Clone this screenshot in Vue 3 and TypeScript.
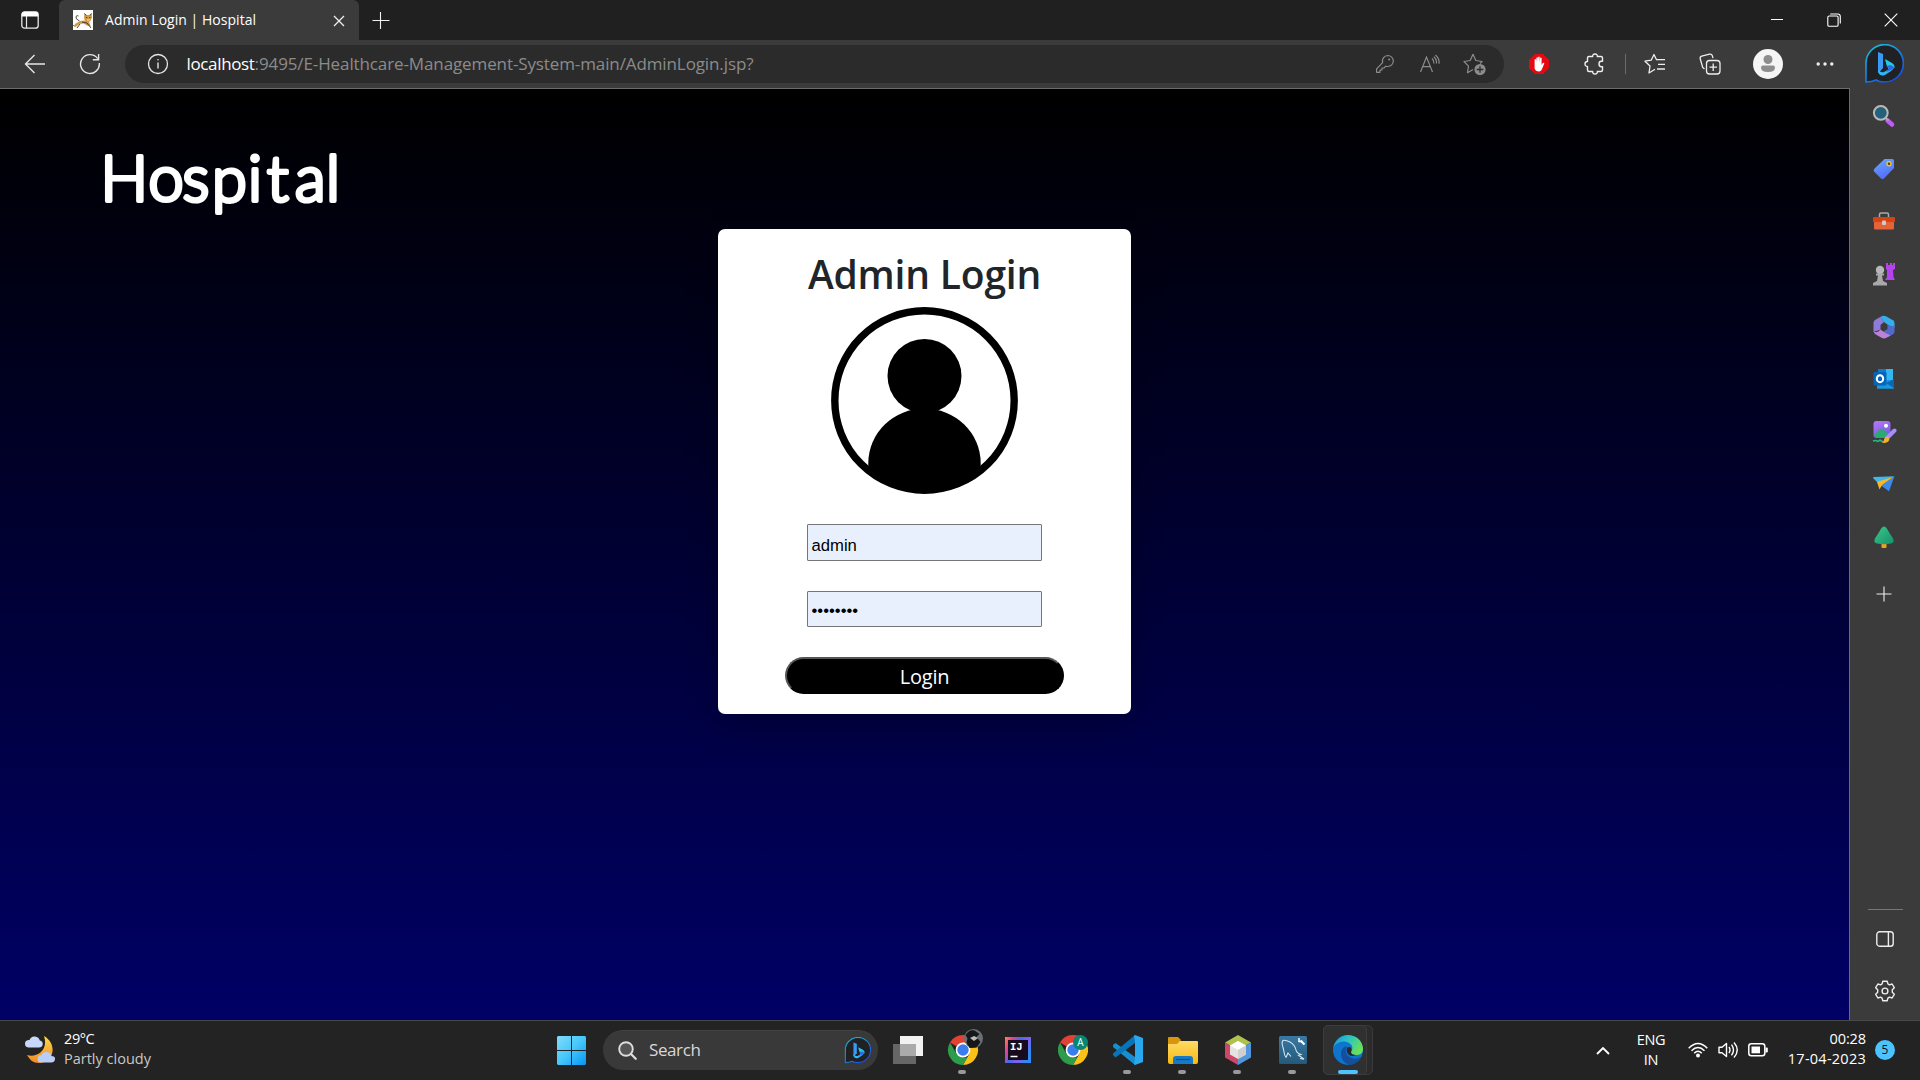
<script setup lang="ts">
interface TaskApp {
  id: string
  running: boolean
}

const apps: TaskApp[] = [
  { id: 'taskview', running: false },
  { id: 'chrome-photo', running: true },
  { id: 'intellij', running: false },
  { id: 'chrome-a', running: false },
  { id: 'vscode', running: true },
  { id: 'folder', running: true },
  { id: 'netbeans', running: true },
  { id: 'mysql', running: true },
  { id: 'edge', running: false },
]

const tools: string[] = ['search', 'shopping', 'tools', 'games', 'm365', 'outlook', 'designer', 'drop', 'tree']
</script>

<template>
  <div class="screen">
    <header class="tabs">
      <div class="tab-actions">
        <svg width="18" height="18" viewBox="0 0 18 18"><rect x="0.8" y="0.8" width="16.4" height="16.4" rx="2.8" fill="none" stroke="#e8e8e8" stroke-width="1.3" /><path d="M.8 5.5V3.5Q.8.8 3.5.8h11q2.7 0 2.7 2.7v2z" fill="#fff" /><path d="M5.5 5v12" stroke="#e8e8e8" stroke-width="1.2" /></svg>
      </div>
      <div class="tab">
        <svg class="favicon" width="20" height="20" viewBox="0 0 20 20"><path fill="#fff" d="M0 0h20v20H0z" /><path d="M1 17l1-3 5-3 5-.5L11 8l.5-4.500 2.500 1.500h2l2.500-1.500.5 4-1.500 3.500-1.500 1 2 4.500-4-1-3.500-2-4 .5-4 3z" fill="#d29a45" /><path d="M6.500 11Q2 9 3 6.500q1-1.500 2.500-.5M1 16l-.5-1M9 12l5 1 4 5M11.500 3.500l1.500 2m4 0l1.500-2M7 14l-3 4" fill="none" stroke="#3d3426" stroke-width=".9" /><path d="M13 7.500h1.200m2 0h1.200" stroke="#4c3c1a" /><path d="M14 10h3" stroke="#f5e2a4" /></svg>
        <span class="tab-title">Admin Login | Hospital</span>
        <svg class="tab-close" width="12" height="12" viewBox="0 0 12 12"><path d="M1 1l10 10M11 1L1 11" stroke="#eee" stroke-width="1.3" /></svg>
      </div>
      <svg class="new-tab" width="18" height="18" viewBox="0 0 18 18"><path d="M.5 9.500h17M8.500 1v17" stroke="#f0f0f0" stroke-width="1.1" /></svg>
      <div class="window-controls">
        <svg width="14" height="14" viewBox="0 0 14 14"><path d="M1 6.500h12" stroke="#fff" stroke-width="1" /></svg>
        <svg width="14" height="14" viewBox="0 0 14 14" fill="none" stroke="#fff" stroke-width="1.1"><rect x=".8" y="3" width="10.3" height="10.3" rx="1.3" /><path d="M3.2 1h7.5q2.6 0 2.6 2.6v7" /></svg>
        <svg width="14" height="14" viewBox="0 0 14 14"><path d="M.7.7l12.6 12.6M13.3.7L.7 13.3" stroke="#fff" stroke-width="1.1" /></svg>
      </div>
    </header>

    <nav class="toolbar">
      <div class="nav-back"><svg width="22" height="20" viewBox="0 0 22 20" fill="none" stroke="#e6e6e6" stroke-width="1.4"><path d="M21 10H1.5M10.5 1L1.5 10l9 9" /></svg></div>
      <div class="nav-reload"><svg width="22" height="22" viewBox="0 0 22 22" fill="none" stroke="#e6e6e6" stroke-width="1.4"><path d="M20.3 10A9.4 9.4 0 1 1 18.7 5.7M19.6 1v5.8h-5.8" /></svg></div>
      <div class="address">
        <svg class="info" width="22" height="22" viewBox="0 0 22 22" fill="none" stroke="#e6e6e6" stroke-width="1.3"><circle cx="11" cy="11" r="9.5" /><path d="M11 9.5v6" stroke-width="1.4" /><circle cx="11" cy="6.8" r=".8" fill="#e6e6e6" stroke="none" /></svg>
        <div class="url"><span class="host">localhost</span><span class="path">:9495/E-Healthcare-Management-System-main/AdminLogin.jsp?</span></div>
        <div class="address-icons">
          <svg width="20" height="20" viewBox="0 0 20 20" fill="none" stroke="#8c8c8c" stroke-width="1.2"><path d="M12.8 1.5a5.5 5.5 0 0 1 0 11q-1.1 0-2-.3L9 14H7v2H5v2.3H1.6v-3.5l6-6.1a5.5 5.5 0 0 1 5.2-7.2z" stroke-linejoin="round" /><circle cx="14.2" cy="5.6" r="1" fill="#8c8c8c" stroke="none" /></svg>
          <svg width="22" height="20" viewBox="0 0 22 20" fill="none" stroke="#8c8c8c" stroke-width="1.2"><path d="M1.5 18L7.5 3l6 15M3.6 12.7h7.8M13 4.5q2.1 1.8 2 5M14.8 2.7q3 2.4 2.7 6.8M16.5 1q4 3.4 3.6 8.8" /></svg>
          <svg width="24" height="22" viewBox="0 0 24 22" fill="none" stroke="#8c8c8c" stroke-width="1.2"><path d="M10 16.5l-5.5 3.2 1-6.5L1 8.5l6.2-1L10 1.3l2.8 6.2 6.3 1-2 2" stroke-linejoin="round" /><circle cx="17" cy="16.5" r="5.6" fill="#8c8c8c" stroke="none" /><path d="M17 13.2v6.6M13.7 16.5h6.6" stroke="#2b2b2b" stroke-width="1.3" /></svg>
        </div>
      </div>
      <div class="tools-row">
        <div><svg width="20" height="20" viewBox="0 0 20 20"><path d="M6 0h8l6 6v8l-6 6H6l-6-6V6z" fill="#e50914" /><path d="M5.6 11V5.500q1-.8 1.500 0V9l.3-5.300q.9-.9 1.500 0V9l.3-6q.9-.9 1.500 0v6l.4-5q.9-.8 1.500 0v7l1.200-2q1.200-.6 1.500.4l-2.600 6.400q-.9 1.700-2.700 1.700-3.500 0-4.400-3z" fill="#fff" /></svg></div>
        <div><svg width="22" height="22" viewBox="0 0 22 22" fill="none" stroke="#eee" stroke-width="1.400" stroke-linejoin="round"><path d="M5 3.500h3.700Q8.500 1 11 1t2.300 2.500H17q1.500 0 1.500 1.500v3.300h-1.200q-2.300 0-2.300 2.700t2.300 2.700h1.200V17q0 1.500-1.500 1.500h-3.700Q13.500 21 11 21t-2.300-2.500H5q-1.500 0-1.500-1.500v-3.500Q1 13.500 1 11t2.500-2.500V5q0-1.500 1.500-1.500z" /></svg></div>
        <i class="separator"></i>
        <div><svg width="22" height="22" viewBox="0 0 22 22" fill="none" stroke="#eee" stroke-width="1.3" stroke-linejoin="round"><path d="M11 16.3L5 20l1-7L1 8.2l6.2-1L10 1.5l2.500 5.200H21M14 11.300h7M13 16h8" /></svg></div>
        <div><svg width="22" height="22" viewBox="0 0 22 22" fill="none" stroke="#eee" stroke-width="1.3"><rect x="7.5" y="7.5" width="13.5" height="13.5" rx="3" /><path d="M14.2 10.5v7.500M10.500 14.200H18M5.500 16L3.700 14.500 1.200 5.800q-.4-2 1.500-2.700l7.800-2Q12.800.8 13.300 2.600l.7 2.600" /></svg></div>
        <div><svg width="30" height="30" viewBox="0 0 30 30"><circle cx="15" cy="15" r="15" fill="#f5f5f5" /><circle cx="15" cy="10.500" r="4.500" fill="#8d8d8d" /><path d="M10 16.500h10q2 0 2 2 0 4.500-7 4.500t-7-4.500q0-2 2-2z" fill="#8d8d8d" /></svg></div>
        <div><svg width="18" height="6" viewBox="0 0 18 6" fill="#eee"><circle cx="2.2" cy="3" r="1.7" /><circle cx="9" cy="3" r="1.7" /><circle cx="15.8" cy="3" r="1.7" /></svg></div>
        <div><svg width="40" height="40" viewBox="0 0 40 40"><use href="#bing" /></svg></div>
      </div>
    </nav>

    <div class="content">
      <main class="page">
        <h1 class="brand">
          <svg width="260" height="96" viewBox="90 130 260 96"><text y="200.5 200.5 200.5 202 200.5 200.500 200.500 200.500" x="100.5 148.5 182.5 212 248 267 295 326">Hospital</text></svg>
        </h1>
        <form class="card" @submit.prevent>
          <h2>Admin Login</h2>
          <svg class="person" width="187" height="187" viewBox="0 0 187 187"><defs><clipPath id="disc"><circle cx="93.5" cy="93.5" r="92" /></clipPath></defs><circle cx="93.5" cy="93.5" r="89.7" fill="none" stroke="#000" stroke-width="7.4" /><circle cx="93.5" cy="69" r="37" /><path clip-path="url(#disc)" d="M37.3 187v-31a56.2 54.5 0 0 1 112.4 0v31z" /></svg>
          <div class="field user">admin</div>
          <div class="field pass">••••••••</div>
          <button class="submit" type="submit">Login</button>
        </form>
      </main>

      <aside class="sidebar">
        <div v-for="tool in tools" :key="tool" class="side-item">
          <svg v-if="tool === 'search'" width="24" height="24" viewBox="0 0 24 24"><path d="M15.500 16.500l4.500 4" stroke="#c05cf5" stroke-width="4.500" stroke-linecap="round" /><path d="M12.500 13l4 3.500" stroke="#aaa" stroke-width="2" /><circle cx="8.8" cy="8.8" r="6.9" fill="#23627d" stroke="#bdb9b5" stroke-width="2" /></svg>
          <svg v-else-if="tool === 'shopping'" width="24" height="24" viewBox="0 0 24 24"><path d="M12.500 2l7.500-.1q2 0 2 2V11L12 21.500q-1.500 1.200-3 0l-6.700-6.700q-1.300-1.600 0-3z" fill="url(#tag)" /><circle cx="17" cy="6.8" r="2" fill="#473b30" stroke="#f6c51a" stroke-width="1.4" /></svg>
          <svg v-else-if="tool === 'tools'" width="24" height="24" viewBox="0 0 24 24"><path d="M7.500 8V5.500Q7.500 4 9 4h6q1.500 0 1.500 1.500V8" fill="none" stroke="#aaa" stroke-width="1.500" /><rect x="2" y="11" width="20" height="9.500" rx="1.200" fill="#e66238" /><path d="M2 8h20l1 .8V13H1V8.800z" fill="#d44311" /><rect x="10" y="11.500" width="4" height="4.500" rx="1" fill="#ccc" /></svg>
          <svg v-else-if="tool === 'games'" width="24" height="24" viewBox="0 0 24 24"><path d="M14 1h2v2h2V1h2v2h1V1h2v6l-2 1 .5 7 1.500 3H13l2-3V8l-1-1z" fill="#b543ed" /><circle cx="8" cy="8" r="4.200" fill="#b7b7b7" /><path d="M4 11.500h8v2h-2l1 5.500 4 2v2.500H1V21l4-2 1-5.500H4z" fill="#a9a9a9" /></svg>
          <svg v-else-if="tool === 'm365'" width="24" height="24" viewBox="0 0 24 24"><path d="M10 1L3 5q-1.500 1-1.500 3v9l7-2.500V10l3.500-3q-3-3-2-6z" fill="#917bd9" /><path d="M10 1q2-.8 4 .2l7 4q1.500 1 1.500 3V13l-6.500-3-4-3Q9 4 10 1z" fill="#35afe8" /><path d="M22.500 10v7q0 1.400-1.500 2.300l-5 2.700-7-4 6.500-4V9.700q5 3 7 .3z" fill="#5369cd" /><path d="M1.500 16.500q4 2 7-2l4 3 6 3-4 2.300q-2.500 1.200-5 0L3 19z" fill="#bd82d8" /></svg>
          <svg v-else-if="tool === 'outlook'" width="24" height="24" viewBox="0 0 24 24"><path fill="#35b8f1" d="M6 2h15v13H6z" /><path fill="#0f79cc" d="M6 2h8v7H6z" /><path d="M5 13h17v8q0 .8-.8.800H5z" fill="#1898e0" /><path d="M14 16l8-4v9z" fill="#0b66b3" /><rect x="1.500" y="5" width="13" height="13.500" rx="1.300" fill="#0565b8" /><ellipse cx="8" cy="11.700" rx="3.200" ry="3.500" fill="none" stroke="#fff" stroke-width="2" /></svg>
          <svg v-else-if="tool === 'designer'" width="26" height="26" viewBox="0 0 26 26"><rect x="2.500" y="2" width="17" height="17" rx="3" fill="url(#violet)" /><circle cx="15" cy="6.800" r="2" fill="#fff" /><path d="M3 16l6-6q1.500-1 3 0l6 6q-1 3-3 3H6q-2 0-3-3z" fill="#2aa970" /><path d="M2 22q3-1 4 0t3-1l3 2" fill="none" stroke="#21bd83" stroke-width="1.600" /><path d="M16 19l7.500-7.500" stroke="#a78df5" stroke-width="4" stroke-linecap="round" /><path d="M17.500 18q2 3-1 5-3 1.500-5.500.500 2-1 2-3 1-3.500 4.500-2.500z" fill="#f4b12d" /></svg>
          <svg v-else-if="tool === 'drop'" width="24" height="24" viewBox="0 0 24 24"><path d="M1 6q0-.8 1-1l20-.8L6 11z" fill="#42b7ed" /><path d="M22.500 4L9 13.500l8 5.700z" fill="#3b8bed" /><path d="M22 4.500L5 10l2.500 7.500L10 13z" fill="#f7b823" /></svg>
          <svg v-else width="24" height="24" viewBox="0 0 24 24"><rect x="9.500" y="18" width="5" height="5" rx=".8" fill="#eea21a" /><path d="M9.500 3q2.500-3 5 0l3 5 3.500 5.500q2 4-2 5-7 1.500-14 0-4-1-2-5L6.500 8z" fill="url(#leaf)" /></svg>
        </div>
        <div class="side-add"><svg width="16" height="16" viewBox="0 0 16 16"><path d="M.5 8h15M8 .5v15" stroke="#eee" stroke-width="1.1" /></svg></div>
        <div class="side-bottom">
          <svg width="18" height="16" viewBox="0 0 18 16" fill="none" stroke="#eee" stroke-width="1.4"><rect x=".8" y=".8" width="16.4" height="14.4" rx="2.8" /><path d="M12.4 1v14" /></svg>
          <svg class="gear" width="22" height="22" viewBox="0 0 22 22" fill="none" stroke="#eee" stroke-width="1.4" stroke-linejoin="round"><path d="M8.8 1.200h4.400l.7 2.700 1.500.9 2.700-.8 2.200 3.700-2 2v2.600l2 2-2.200 3.700-2.700-.8-1.500.9-.7 2.700H8.800l-.7-2.700-1.500-.9-2.700.8-2.200-3.700 2-2V9.700l-2-2L3.900 4l2.700.8 1.500-.9z" /><circle cx="11" cy="11" r="2.900" /></svg>
        </div>
      </aside>
    </div>

    <footer class="taskbar">
      <div class="weather">
        <svg width="30" height="28" viewBox="0 0 30 28"><path d="M19 0c14 8 10 27-5 27-6 0-9-3-12-8 9 3 22-4 17-19z" fill="url(#moon)" /><path d="M4 11.500q-4 0-4-3.800T4.500 4Q6 0 10 .5t4.800 4Q18 5 17.700 8.500q-.5 3-3.700 3z" fill="#c6d9fb" /><path d="M16.500 26.500q-4 0-4-3.500t4-3.800q1.500-3.700 5.500-3.200t4.300 4Q30.500 20 30 23.300q-.5 3.200-3.700 3.200z" fill="#b8cef8" /></svg>
        <div class="weather-text"><span class="temp">29°C</span><span class="sky">Partly cloudy</span></div>
      </div>
      <svg class="start" width="29" height="29" viewBox="0 0 29 29" fill="url(#win)"><path d="M1 0h13v14H0V1zM15 0h13l1 1v13H15zM0 15h14v14H1l-1-1zM15 15h14v13l-1 1H15z" /></svg>
      <div class="search">
        <svg width="19" height="19" viewBox="0 0 19 19"><circle cx="8" cy="8" r="6.800" fill="#555" stroke="#ddd" stroke-width="1.900" /><path d="M13 13l4.700 4.700" stroke="#ddd" stroke-width="2.300" stroke-linecap="round" /></svg>
        <span>Search</span>
        <svg class="search-bing" width="27" height="27" viewBox="0 0 40 40"><use href="#bing" /></svg>
      </div>
      <div class="apps">
        <div v-for="app in apps" :key="app.id" class="app" :class="app.id">
          <svg v-if="app.id === 'taskview'" width="30" height="28" viewBox="0 0 30 28"><path d="M0 8h23v20H0z" fill="#666" /><path d="M7 0h23v20H7z" fill="#f2f2f2" /><path d="M7 8h16v12H7z" fill="#aaa" /></svg>
          <svg v-else-if="app.id === 'chrome-photo'" width="42" height="42" viewBox="0 0 42 42"><use href="#chrome" x="6" y="6" /><circle cx="31.500" cy="9.500" r="9.500" fill="#6b6f72" /><path d="M23.500 6q4-6 9-4.500l5 3.500-3 3 4 5-4 5.500-7 .5-3-5.500 1-4z" fill="#151719" /><path d="M28 9l4-2 4 2-4 3z" fill="#b8bcbd" /></svg>
          <svg v-else-if="app.id === 'intellij'" width="28" height="28" viewBox="0 0 28 28"><path d="M1 1h26v26H1z" fill="url(#ij)" /><path d="M4 4h20v20H4z" fill="#170c1e" /><text class="ij" x="6" y="14">IJ</text><path d="M6.500 20.500h7" stroke="#fff" stroke-width="1.500" /></svg>
          <svg v-else-if="app.id === 'chrome-a'" width="30" height="30" viewBox="0 0 30 30"><use href="#chrome" /><circle cx="22.500" cy="7.500" r="7.500" fill="#078575" /><text class="letter" x="22.500" y="11">A</text></svg>
          <svg v-else-if="app.id === 'vscode'" width="30" height="30" viewBox="0 0 30 30"><path d="M0 10l2.500-2 19.500 14v8L0 12z" fill="#168fd2" /><path d="M0 20l2.500 2.500L22 8V0L0 18.500z" fill="#0875ba" /><path d="M22 0l8 3v24l-8 3-1-1 1-5V7l-1-6z" fill="#29a8ed" /></svg>
          <svg v-else-if="app.id === 'folder'" width="30" height="27" viewBox="0 0 30 27"><path d="M0 1q0-1 1-1h9l3 3-3 5H0z" fill="#d8960e" /><path d="M0 7h9l3-3h17q1 0 1 1v20q0 2-2 2H2q-2 0-2-2z" fill="url(#file)" /><path d="M5 27v-5q0-3 3-3h14q3 0 3 3v5z" fill="#167bc7" /><path d="M8 22.500h14" stroke="#075392" stroke-width="1.200" /></svg>
          <svg v-else-if="app.id === 'netbeans'" width="28" height="30" viewBox="0 0 28 30"><path d="M14 0l13 7.500-6 3.500-7-4-7 4-6-3.500z" fill="#adc34d" /><path d="M1 7.500L7 11v8l7 4v7L1 22.500z" fill="#cc4769" /><path d="M27 7.500L21 11v8l-7 4v7l13-7.500z" fill="#5297dc" /><path d="M6 10.500L14 6l8 4.500v9L14 24l-8-4.500z" fill="#e5e3e1" /><path d="M6 10.500L14 6l8 4.500-8 4.500z" fill="#fff" /><path d="M14 15l8-4.500v9L14 24z" fill="#d0d0d0" /></svg>
          <svg v-else-if="app.id === 'mysql'" width="28" height="28" viewBox="0 0 28 28"><rect width="28" height="28" rx="1.500" fill="url(#sql)" /><path d="M7 21.500C5 19 5 16 4.500 13 3.500 10 2 6 4 4.500 6 3.500 9 5 11 6q5 3 6 8 .5 3 5 4.500l-2.500.8q3 2 5.500 4l-4-.8M7 21.500l2-4.500 3 3.500" fill="none" stroke="#d5e5ee" stroke-width="1.100" /><path d="M21.500 4.500l4 4" stroke="#fff" stroke-width="2.200" /><path d="M20 2v3.500h3.500" fill="none" stroke="#fff" stroke-width="1.500" /></svg>
          <svg v-else width="30" height="30" viewBox="0 0 30 30"><circle cx="15" cy="15" r="15" fill="#0f74cc" /><path d="M.3 12.500C2 5 8 0 15 0q13 1 15 13 .5 7-7 7-5 0-5-3 2.500-3.500.5-7Q15 6 10 6.500 3 7.500.3 12.500z" fill="url(#edgegreen)" /><path d="M12.500 11.500q-5 2-4.500 8.500.7 7 8 9.900 8-.4 12-7.900-8 4-13.500-1.500-3.500-4-.5-8.500z" fill="#134f9c" /><path d="M18 17q0 3 5 3-5 2.500-8-1-2.500-3.500-.5-6.500 3-1.500 4 1.500.2 1.500-.5 3z" fill="#26292e" /></svg>
          <i v-if="app.running" class="running"></i>
          <i v-if="app.id === 'edge'" class="running active"></i>
        </div>
      </div>
      <div class="tray">
        <svg class="chev" width="14" height="9" viewBox="0 0 14 9"><path d="M1 8l6-6 6 6" fill="none" stroke="#fff" stroke-width="1.900" /></svg>
        <div class="lang"><span>ENG</span><span>IN</span></div>
        <svg class="wifi" width="20" height="16" viewBox="0 0 20 16" fill="none" stroke="#fff" stroke-width="1.500"><path d="M.7 6.200q9.300-9.500 18.600 0M3.500 8.800q6.500-6.500 13 0M6.200 11.300q3.800-4 7.600 0" /><circle cx="10" cy="13.500" r="2" fill="#fff" stroke="none" /></svg>
        <svg class="volume" width="21" height="18" viewBox="0 0 21 18" fill="none" stroke="#fff" stroke-width="1.400"><path d="M1 6.300h3L8.500 2.500v13L4 11.700H1z" stroke-linejoin="round" /><path d="M11 6q2 3 0 6M13.500 3.700q4 5.300 0 10.600M16 1.500q6.500 7.500 0 15" /></svg>
        <svg class="battery" width="20" height="14" viewBox="0 0 20 14"><rect x=".8" y=".8" width="16" height="12" rx="2.500" fill="none" stroke="#fff" stroke-width="1.500" /><path d="M3.500 3.500H12v6.800H3.500z" fill="#fff" /><path d="M17.500 4.500h1.300q1 0 1 1v3q0 1-1 1h-1.300z" fill="#fff" /></svg>
        <div class="clock"><span>00:28</span><span class="date">17-04-2023</span></div>
        <span class="badge">5</span>
      </div>
    </footer>

    <svg class="defs" width="0" height="0">
      <defs>
        <linearGradient id="ring" x2=".7" y2="1"><stop stop-color="#1cc6d8" /><stop offset="1" stop-color="#174fe3" /></linearGradient>
        <linearGradient id="tag" x2=".4" y2="1"><stop stop-color="#68a9ff" /><stop offset="1" stop-color="#536ffa" /></linearGradient>
        <linearGradient id="violet" x2=".5" y2="1"><stop stop-color="#b978fa" /><stop offset="1" stop-color="#765ce0" /></linearGradient>
        <linearGradient id="leaf" x2="1" y2="1"><stop stop-color="#39c987" /><stop offset="1" stop-color="#16916c" /></linearGradient>
        <linearGradient id="moon" x2="0" y2="1"><stop stop-color="#ffd84a" /><stop offset="1" stop-color="#ef8b24" /></linearGradient>
        <linearGradient id="win" x2="1" y2="1"><stop stop-color="#81dcfb" /><stop offset=".5" stop-color="#45c7fa" /><stop offset="1" stop-color="#0794f5" /></linearGradient>
        <linearGradient id="ij" x2="1" y2=".5"><stop stop-color="#ff8a3d" /><stop offset=".25" stop-color="#e74090" /><stop offset=".5" stop-color="#416cf0" /><stop offset=".75" stop-color="#8a5be8" /><stop offset="1" stop-color="#2f8af5" /></linearGradient>
        <linearGradient id="file" x2="0" y2="1"><stop stop-color="#ffdb68" /><stop offset="1" stop-color="#f8b90f" /></linearGradient>
        <linearGradient id="sql" x2="0" y2="1"><stop stop-color="#3979a5" /><stop offset="1" stop-color="#24597a" /></linearGradient>
        <linearGradient id="edgegreen" x2="1" y2=".5"><stop stop-color="#188cd8" /><stop offset=".45" stop-color="#28c1c8" /><stop offset="1" stop-color="#69e05a" /></linearGradient>
        <g id="bing"><path d="M2 38V20A18.700 18.700 0 1 1 20.500 38Q15 38 12 36q-4 2-10 2z" fill="#202125" stroke="url(#ring)" stroke-width="1.600" /><path d="M14 8l5 2v14l-4.500 5-.5-2z" fill="#389af2" /><path d="M14 25v3q2 5 7 3l6-4q3-2 3-5l-10 6q-4 1-6-3z" fill="#34b3f5" /><path d="M21 15l7 4q3 2 2.500 5l-6 1-2-4z" fill="#20cce3" /><path d="M22 22q4 1 2 4l-3 2q5-1 9-4-1-4-8-2z" fill="#2e65ec" /></g>
        <g id="chrome"><path d="M15 15L2 7.500A15 15 0 0 1 28 7.500z" fill="#e34133" /><path d="M15 7.500h13A15 15 0 0 1 15 30l6.500-11.500z" fill="#fbc116" /><path d="M2 7.500L8.500 18.700 15 22.500h4.200L15 30A15 15 0 0 1 2 7.500z" fill="#2f9c4c" /><circle cx="15" cy="15" r="7.400" fill="#fff" /><circle cx="15" cy="15" r="5.700" fill="#3b7ded" /></g>
      </defs>
    </svg>
  </div>
</template>

<style>
body { margin: 0; background: #202020; overflow: hidden; }
</style>

<style scoped>
.screen { width: 1920px; height: 1080px; display: flex; flex-direction: column; overflow: hidden; font-family: "Open Sans", "Noto Sans", sans-serif; color: #fff; }
.screen svg { display: block; flex: none; }
.tabs { height: 40px; flex: none; display: flex; align-items: center; background: #202020; }
.tab-actions { width: 59px; height: 40px; display: flex; align-items: center; justify-content: center; box-sizing: border-box; padding-left: 1px; }
.tab { width: 300px; height: 40px; box-sizing: border-box; display: flex; align-items: center; padding: 0 14px; background: #3b3b3b; border-radius: 6px 6px 0 0; }
.tab-title { margin-left: 12px; font-size: 14px; line-height: 20px; letter-spacing: 0.03px; white-space: nowrap; }
.tab-close { margin-left: auto; margin-top: 1px; }
.new-tab { margin-left: 13px; margin-top: -1px; }
.window-controls { margin-left: auto; display: flex; gap: 43px; padding-right: 22px; }
.toolbar { height: 48px; flex: none; display: flex; align-items: center; background: #3b3b3b; }
.nav-back { width: 70px; display: flex; justify-content: center; }
.nav-reload { width: 40px; display: flex; justify-content: center; }
.address { width: 1379px; height: 38px; margin-left: 15px; border-radius: 19px; background: #2b2b2b; display: flex; align-items: center; box-sizing: border-box; padding-right: 7px; }
.info { margin-left: 21.5px; }
.url { margin-left: 18px; font-size: 17px; line-height: 24px; white-space: nowrap; }
.host { letter-spacing: -0.35px; }
.path { color: #8b8b8b; letter-spacing: -0.11px; }
.address-icons { margin-left: auto; display: grid; grid-template-columns: 45px 45px 45px; justify-items: center; align-items: center; }
.tools-row { height: 48px; flex: none; display: flex; align-items: center; }
.tools-row > div { width: 45px; display: flex; justify-content: center; margin-left: 10px; }
.tools-row > div:first-child { margin-left: 12px; }
.tools-row > div:nth-child(2) { margin-left: 11px; }
.tools-row > div:nth-child(4) { margin-left: 6px; }
.tools-row > div:nth-child(6) { margin-left: 13px; }
.tools-row > div:nth-child(7) { margin-left: 12px; }
.tools-row > div:nth-child(8) { margin-left: 14px; }
.separator { width: 1px; height: 20px; background: #6b6b6b; margin-left: 8px; }
.content { height: 932px; flex: none; display: flex; background: #3b3b3b; }
.page { width: 1849px; height: 931px; border-top: 1px solid #6b6b6b; border-right: 1px solid #6b6b6b; background: linear-gradient(#000, #006); display: flex; align-items: flex-start; }
.brand { margin: 41px 0 0 90px; width: 260px; height: 96px; flex: none; }
.brand text { font-family: "Comic Sans MS", Lato, sans-serif; font-weight: 300; font-size: 63px; fill: #fff; stroke: #fff; stroke-width: 4.2px; stroke-linejoin: round; }
.card { width: 413px; height: 485px; margin: 140px 0 0 368px; border-radius: 7px; background: #fff; display: flex; flex-direction: column; align-items: center; color: #212529; box-shadow: 0 14px 34px rgba(0, 0, 0, .2); }
.card h2 { margin: 19px 0 0; height: 59px; line-height: 52px; font-size: 39px; font-weight: 600; letter-spacing: -0.2px; white-space: nowrap; }
.field { width: 235px; box-sizing: border-box; border: 1px solid #767676; border-radius: 1px; background: #e8f0fe; padding-left: 3.5px; color: #000; font-family: "Liberation Sans", Arial, sans-serif; font-size: 16.67px; }
.user { height: 37px; line-height: 42px; margin-top: 30px; }
.pass { height: 36px; line-height: 38px; margin-top: 30px; }
.submit { width: 279px; height: 37px; margin-top: 30px; padding: 1px 0 0; box-sizing: border-box; border: 2px solid #000; border-top-color: #555; border-left-color: #555; border-radius: 19px; background: #000; color: #fff; font: 20px/34px "Open Sans", "Noto Sans", sans-serif; letter-spacing: -.2px; }
.sidebar { width: 68px; padding: 2px 2px 0 0; height: 930px; display: flex; flex-direction: column; }
.side-item { height: 52.6px; flex: none; display: flex; align-items: center; justify-content: center; }
.side-add { height: 61px; display: flex; align-items: center; justify-content: center; }
.side-bottom { width: 35px; height: 111px; box-sizing: border-box; margin: auto 0 0 17.5px; border-top: 1px solid #777; padding-top: 21px; display: flex; flex-direction: column; align-items: center; }
.gear { margin-top: 33px; }
.taskbar { height: 60px; flex: none; box-sizing: border-box; border-top: 1px solid #494949; padding-bottom: 1px; background: #232323; display: flex; align-items: center; }
.weather { width: 557px; display: flex; align-items: center; box-sizing: border-box; padding-left: 25px; }
.weather-text { display: flex; flex-direction: column; margin-left: 9px; margin-top: -2px; font-size: 14.5px; line-height: 20px; }
.temp { letter-spacing: -.4px; }
.sky { color: #c8c8c8; letter-spacing: 0; }
.start { margin-top: 1px; }
.search { width: 275px; height: 40px; box-sizing: border-box; margin-left: 17px; border-radius: 20px; background: #393939; border-top: 1px solid #424242; display: flex; align-items: center; padding: 0 7px 0 15px; font-size: 17px; color: #d8d8d8; }
.search span { margin: -2px 0 0 12px; letter-spacing: -.4px; }
.search-bing { margin-left: auto; }
.apps { display: flex; margin-left: 2px; }
.app { width: 55px; height: 50px; display: flex; align-items: center; justify-content: center; position: relative; }
.running { position: absolute; bottom: 1px; left: 23px; width: 8px; height: 4px; border-radius: 2px; background: #999; }
.edge { width: 50px; margin-left: 2.5px; background: #2b2b2b; border: 1px solid #3a3a3a; border-radius: 5px; box-sizing: border-box; }
.edge::before { content: ""; position: absolute; inset: -1px 5px -1px -1px; border: 1px solid #3d3d3d; border-radius: 5px; background: #303030; }
.edge svg { position: relative; }
.active { left: 14px; bottom: 0; width: 20px; background: #4cc2ff; }
.ij { font: bold 10.5px "Liberation Mono", monospace; fill: #fff; }
.letter { font: 10px "Open Sans", sans-serif; fill: #fff; text-anchor: middle; }
.tray { margin-left: auto; display: flex; align-items: center; padding-right: 25px; font-size: 14.5px; line-height: 20px; }
.lang { width: 40px; display: flex; flex-direction: column; align-items: center; margin: -1px 0 0 21px; letter-spacing: -.3px; }
.wifi { margin-left: 17px; }
.volume { margin-left: 10px; }
.battery { margin-left: 9px; }
.clock { width: 90px; margin: -2px 0 0 8px; display: flex; flex-direction: column; align-items: flex-end; letter-spacing: -.1px; white-space: nowrap; }
.date { letter-spacing: .25px; }
.badge { width: 20px; height: 20px; margin-left: 9px; border-radius: 50%; background: #4cc2ff; color: #111; font-size: 12px; text-align: center; }
.defs { position: absolute; }
</style>
